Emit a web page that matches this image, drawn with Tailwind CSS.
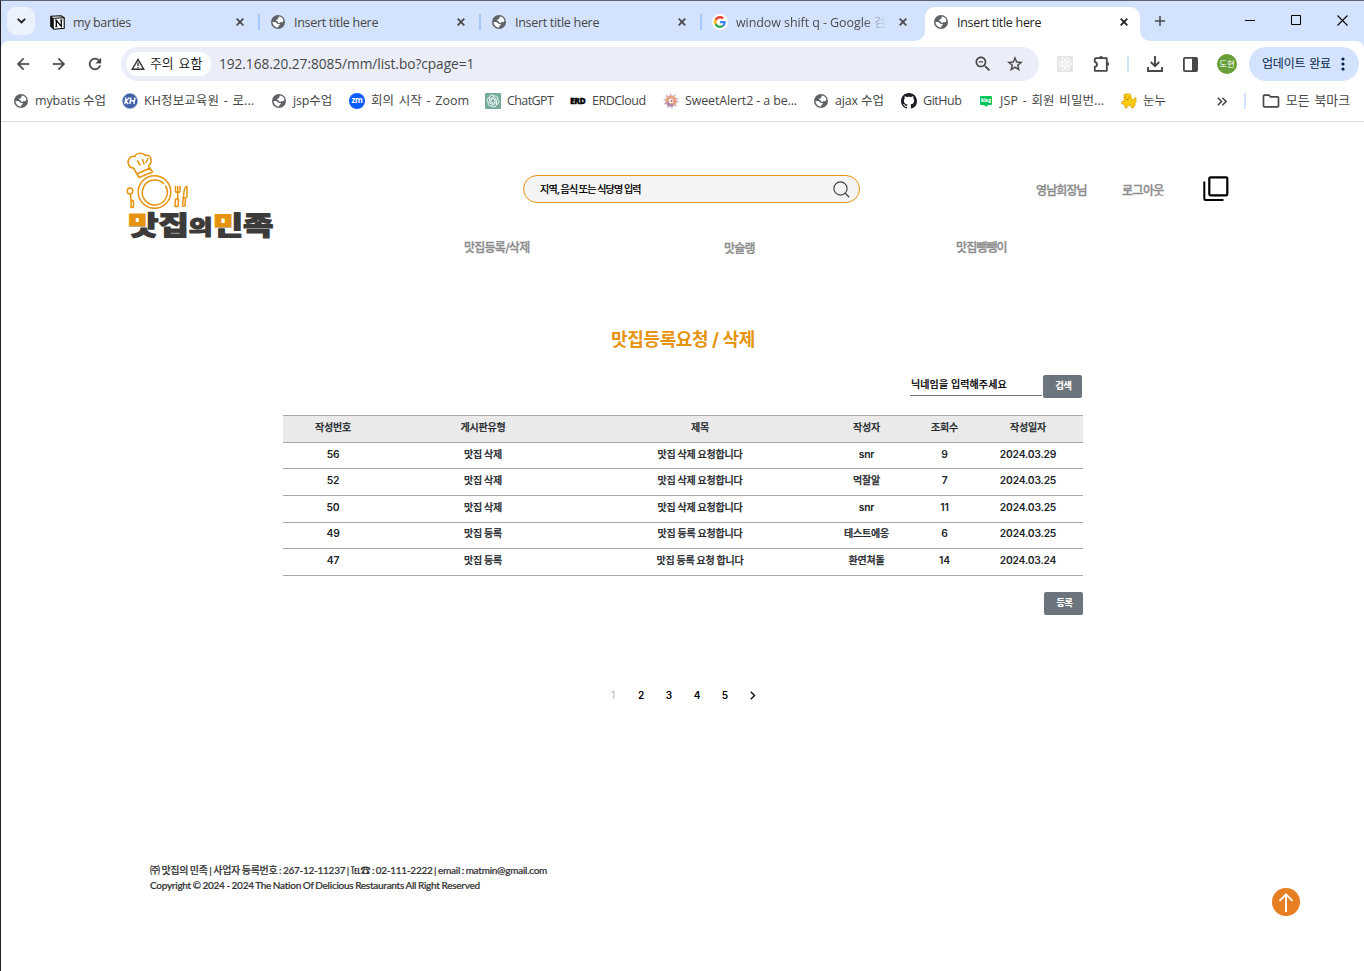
<!DOCTYPE html>
<html lang="ko">
<head>
<meta charset="utf-8">
<title>Insert title here</title>
<script src="https://cdn.jsdelivr.net/npm/@tailwindcss/browser@4"></script>
</head>
<body class="w-[1364px] h-[971px] overflow-hidden bg-white border-t border-l border-t-[#5f6475] border-l-[#222] font-[family-name:'Open_Sans','Noto_Sans_CJK_KR',sans-serif] text-[#474747] whitespace-nowrap">
<svg class="hidden">
  <symbol id="globe" viewBox="0 0 14 14"><circle cx="7" cy="7" r="7" fill="#5f6368"/><path fill="#fff" d="M8 1.500c2.400.2 4.200 2 4.500 4.300l-1.200 1.400-1.800-.2-.8 1-1.600-.5-.5-1.200-1.300-.3.1-1.500 1.600-.3.3-1.200zM1.500 6.900l3 .2 1.800 1.700 2.300.2.2 1.100-1.400.8-.3 1.600C3.800 12.300 1.700 9.900 1.500 6.900z"/></symbol>
  <symbol id="close" viewBox="0 0 8 8"><path d="M.7.7l6.600 6.600M7.300.7L.7 7.300" stroke="currentColor" stroke-width="1.700"/></symbol>
</svg>

<div class="h-[40px] bg-[#d3e3fd] flex">
  <div class="ml-[6px] mt-[6px] size-[28px] rounded-[9px] bg-[#ebf2fe] flex items-center justify-center"><svg class="w-[9px] h-[6px]" viewBox="0 0 9 6"><path d="M.8.8l3.700 3.700L8.200.8" fill="none" stroke="#1f1f1f" stroke-width="1.800"/></svg></div>
  <div class="ml-[4px] mt-[6px] w-[221px] h-[30px] flex items-center pl-[11px] relative">
    <svg class="size-[15px]" viewBox="0 0 15 15"><path d="M.8 1.300L11 .7l3.200 2.100v10.500l-10.400.9-3-3z" fill="#fff" stroke="#000" stroke-width="1.100"/><path d="M.8 1.300l3 2v10.900l-3-3z" fill="#111"/><path d="M3.800 3.300l10.400-.5" stroke="#000"/><path d="M6.300 11.500V5.500l5 5.800V5" fill="none" stroke="#000" stroke-width="1.300"/><path d="M5.300 5.400h2M10.200 5h2.200M5.300 11.700h2" stroke="#000"/></svg>
    <span class="ml-[8px] pt-[2px] text-[12.5px] tracking-[-0.35px]">my barties</span>
    <svg class="size-[8px] absolute right-[16px]"><use href="#close"/></svg><span class="absolute right-0 w-[2px] h-[16px] bg-[#a8c7fa]"></span>
  </div>
  <div class="mt-[6px] w-[221px] h-[30px] flex items-center pl-[11px] relative">
    <svg class="size-[14px]"><use href="#globe"/></svg><span class="ml-[9px] pt-[2px] text-[12.5px] tracking-[-0.3px]">Insert title here</span>
    <svg class="size-[8px] absolute right-[16px]"><use href="#close"/></svg><span class="absolute right-0 w-[2px] h-[16px] bg-[#a8c7fa]"></span>
  </div>
  <div class="mt-[6px] w-[221px] h-[30px] flex items-center pl-[11px] relative">
    <svg class="size-[14px]"><use href="#globe"/></svg><span class="ml-[9px] pt-[2px] text-[12.5px] tracking-[-0.3px]">Insert title here</span>
    <svg class="size-[8px] absolute right-[16px]"><use href="#close"/></svg><span class="absolute right-0 w-[2px] h-[16px] bg-[#a8c7fa]"></span>
  </div>
  <div class="mt-[6px] w-[221px] h-[30px] flex items-center pl-[10px] relative">
    <span class="size-[16px] rounded-full bg-white flex items-center justify-center"><svg class="size-[12px]" viewBox="0 0 48 48"><path fill="#EA4335" d="M24 9.500c3.540 0 6.710 1.220 9.210 3.600l6.850-6.850C35.900 2.380 30.470 0 24 0 14.620 0 6.510 5.380 2.560 13.220l7.980 6.190C12.430 13.720 17.740 9.500 24 9.500z"/><path fill="#4285F4" d="M46.980 24.550c0-1.570-.15-3.090-.38-4.550H24v9.020h12.940c-.58 2.960-2.260 5.480-4.780 7.180l7.730 6c4.510-4.180 7.090-10.360 7.090-17.650z"/><path fill="#FBBC05" d="M10.530 28.590c-.48-1.450-.76-2.990-.76-4.590s.27-3.140.76-4.590l-7.980-6.190C.92 16.460 0 20.120 0 24c0 3.880.92 7.540 2.560 10.780l7.970-6.190z"/><path fill="#34A853" d="M24 48c6.480 0 11.930-2.130 15.890-5.810l-7.730-6c-2.150 1.450-4.920 2.300-8.160 2.300-6.260 0-11.570-4.220-13.470-9.910l-7.980 6.190C6.510 42.620 14.620 48 24 48z"/></svg></span>
    <span class="ml-[8px] pt-[2px] w-[150px] overflow-hidden text-[12.5px] tracking-[-0.08px] bg-gradient-to-r from-[#474747] from-85% to-transparent bg-clip-text text-transparent">window shift q - Google 검</span>
    <svg class="size-[8px] absolute right-[16px]"><use href="#close"/></svg>
  </div>
  <div class="ml-[2px] mt-[6px] w-[215px] h-[34px] rounded-t-[10px] bg-white pb-[4px] flex items-center pl-[9px] relative text-[#1f1f1f]">
    <svg class="absolute left-[-10px] bottom-0 size-[10px]" viewBox="0 0 10 10"><path d="M10 0v10H0A10 10 0 0 0 10 0z" fill="#fff"/></svg>
    <svg class="absolute right-[-10px] bottom-0 size-[10px]" viewBox="0 0 10 10"><path d="M0 0v10h10A10 10 0 0 1 0 0z" fill="#fff"/></svg>
    <svg class="size-[14px]"><use href="#globe"/></svg><span class="ml-[9px] pt-[2px] text-[12.5px] tracking-[-0.3px]">Insert title here</span>
    <svg class="size-[8px] absolute right-[12px]"><use href="#close"/></svg>
  </div>
  <svg class="mt-[14px] ml-[14px] size-[12px]" viewBox="0 0 12 12"><path d="M6 1v10M1 6h10" stroke="#474747" stroke-width="1.500"/></svg>
  <div class="ml-auto mr-[16px] mt-[14px] flex gap-[36px] text-black">
    <svg class="size-[10px]" viewBox="0 0 10 10"><path d="M0 5.500h10" stroke="currentColor"/></svg>
    <svg class="size-[10px]" viewBox="0 0 10 10"><path d="M.5.5h9v9h-9z" fill="none" stroke="currentColor"/></svg>
    <svg class="size-[11px]" viewBox="0 0 11 11"><path d="M.5.5l10 10M10.500.5l-10 10" stroke="currentColor" stroke-width="1.100"/></svg>
  </div>
</div>

<div class="bg-[#d3e3fd]"><div class="h-[40px] bg-white rounded-t-[8px] pt-[6px] flex">
  <div class="w-[120px] h-[34px] flex items-center gap-[18px] pl-[13px] text-[#474747]">
    <svg class="size-[18px]" viewBox="0 0 24 24" fill="currentColor" stroke="currentColor" stroke-width=".4"><path d="M20 11H7.830l5.590-5.590L12 4l-8 8 8 8 1.410-1.410L7.830 13H20v-2z"/></svg>
    <svg class="size-[18px] rotate-180" viewBox="0 0 24 24" fill="currentColor" stroke="currentColor" stroke-width=".4"><path d="M20 11H7.830l5.590-5.590L12 4l-8 8 8 8 1.410-1.410L7.830 13H20v-2z"/></svg>
    <svg class="size-[18px]" viewBox="0 0 24 24" fill="currentColor" stroke="currentColor" stroke-width=".4"><path d="M17.650 6.350C16.200 4.900 14.210 4 12 4c-4.420 0-7.990 3.580-7.990 8s3.570 8 7.990 8c3.730 0 6.840-2.550 7.730-6h-2.080c-.82 2.330-3.040 4-5.650 4-3.310 0-6-2.690-6-6s2.690-6 6-6c1.660 0 3.140.69 4.220 1.780L13 11h7V4l-2.350 2.350z"/></svg>
  </div>
  <div class="w-[918px] h-[34px] rounded-full bg-[#ebeef8] flex items-center pl-[5px]">
    <div class="w-[85px] h-[24px] rounded-full bg-white flex items-center pl-[5px] gap-[5px] text-[#1f1f1f] text-[12.9px] [word-spacing:1.5px]"><svg class="w-[14px] h-[12px]" viewBox="0 0 14 12"><path d="M7 1.400L12.800 11.300H1.200z" fill="none" stroke="#333" stroke-width="1.400"/><path d="M7 4.500v3.500M7 9v1.300" stroke="#333" stroke-width="1.300"/></svg>주의 요함</div>
    <span class="ml-[8px] text-[13.7px] tracking-[-0.05px]">192.168.20.27:8085/mm/list.bo?cpage=1</span>
    <svg class="ml-auto size-[20px]" viewBox="0 0 24 24" fill="currentColor"><path d="M15.500 14h-.79l-.28-.27C15.410 12.590 16 11.110 16 9.500 16 5.910 13.090 3 9.500 3S3 5.910 3 9.500 5.910 16 9.500 16c1.610 0 3.090-.59 4.230-1.570l.27.28v.79l5 4.990L20.490 19l-4.990-5zm-6 0C7.010 14 5 11.990 5 9.500S7.010 5 9.500 5 14 7.010 14 9.500 11.990 14 9.500 14zM7 8.700h5v1.600H7z"/></svg>
    <svg class="ml-[13px] mr-[15px] size-[18px]" viewBox="0 0 24 24" fill="currentColor" stroke="currentColor" stroke-width=".4"><path d="M22 9.240l-7.190-.62L12 2 9.190 8.630 2 9.240l5.460 4.730L5.820 21 12 17.270 18.180 21l-1.630-7.030L22 9.240zM12 15.400l-3.760 2.270 1-4.280-3.320-2.880 4.380-.38L12 6.100l1.710 4.040 4.380.38-3.320 2.880 1 4.280L12 15.400z"/></svg>
  </div>
  <div class="flex items-center h-[34px] pl-[18px]">
    <svg class="size-[16px] bg-[#e6e6e6]" viewBox="0 0 16 16"><g fill="none" stroke="#fff" stroke-width=".9"><ellipse cx="8" cy="8" rx="6.500" ry="2.500"/><ellipse cx="8" cy="8" rx="6.500" ry="2.500" transform="rotate(60 8 8)"/><ellipse cx="8" cy="8" rx="6.500" ry="2.500" transform="rotate(120 8 8)"/></g><circle cx="8" cy="8" r="1.300" fill="#fff"/></svg>
    <svg class="ml-[20px] w-[17px] h-[18px]" viewBox="0 0 17 18"><path d="M1.800 3.200h12v4.300M13.800 10.500v5.300h-12v-4.100c3-.4 3-4.200 0-4.600V3.200M13.800 7v4" fill="none" stroke="currentColor" stroke-width="1.800" stroke-linejoin="round"/><path d="M6 3a2 2 0 0 1 4 0zM14.200 7a2 2 0 0 1 0 4z" fill="currentColor"/></svg>
    <span class="ml-[17px] w-[2px] h-[16px] bg-[#d3e3fd]"></span>
    <svg class="ml-[18px] size-[16px]" viewBox="0 0 16 16"><path d="M8 0v10M3.800 6L8 10.200 12.200 6M1 11v4h14v-4" fill="none" stroke="currentColor" stroke-width="1.900"/></svg>
    <svg class="ml-[20px] w-[15px] h-[15px]" viewBox="0 0 15 15"><rect x=".9" y=".9" width="13.200" height="13.200" rx="1" fill="none" stroke="currentColor" stroke-width="1.800"/><path d="M9 1h5v13H9z" fill="currentColor"/></svg>
    <span class="ml-[19px] size-[20px] rounded-full bg-[#689f38] text-white text-[8.5px] flex items-center justify-center">도현</span>
    <div class="ml-[12px] w-[110px] h-[34px] rounded-full bg-[#d3e3fd] flex items-center pl-[13px] text-[#041e49] text-[12px] tracking-[-0.2px] [word-spacing:1px]">업데이트 완료<svg class="ml-[10px] w-[4px] h-[14px]" viewBox="0 0 4 14" fill="#041e49"><circle cx="2" cy="2" r="1.600"/><circle cx="2" cy="7" r="1.600"/><circle cx="2" cy="12" r="1.600"/></svg></div>
  </div>
</div></div>

<div class="h-[41px] bg-white border-b border-[#dfdfdf] pl-[12px] flex items-center text-[12.5px] tracking-[-0.15px]">
  <div class="w-[109px] flex items-center gap-[7px]"><svg class="ml-px size-[14px]"><use href="#globe"/></svg>mybatis 수업</div>
  <div class="w-[149px] flex items-center gap-[6px] tracking-[0.1px] [word-spacing:1.3px]"><svg class="size-[16px]" viewBox="0 0 16 16"><circle cx="8" cy="8" r="7.500" fill="#3f62a8" stroke="#7d97c9" stroke-dasharray="1 1"/><path d="M4 4.500L2.800 11M7.500 4.500L4 8l2.200 3M9 4.500L7.800 11M13 4.500L11.800 11M8.500 7.700h4" fill="none" stroke="#fff" stroke-width="1.400"/></svg>KH정보교육원 - 로...</div>
  <div class="w-[78px] flex items-center gap-[7px]"><svg class="ml-px size-[14px]"><use href="#globe"/></svg>jsp수업</div>
  <div class="w-[136px] flex items-center gap-[6px] tracking-[0px] [word-spacing:1.5px]"><span class="size-[16px] rounded-full bg-[#0b5cff] text-white text-[8px] font-bold leading-[14px] text-center tracking-[-0.3px]">zm</span>회의 시작 - Zoom</div>
  <div class="w-[85px] flex items-center gap-[6px] tracking-[-0.6px]"><svg class="size-[16px] bg-[#74aa9c] rounded-[1px]" viewBox="0 0 16 16"><g fill="none" stroke="#fff" stroke-width=".85"><path id="petal" d="M6 8.900V5.200l3.200-1.900a2.600 2.600 0 0 1 3.700 3.100"/><use href="#petal" transform="rotate(60 8 8)"/><use href="#petal" transform="rotate(120 8 8)"/><use href="#petal" transform="rotate(180 8 8)"/><use href="#petal" transform="rotate(240 8 8)"/><use href="#petal" transform="rotate(300 8 8)"/></g></svg>ChatGPT</div>
  <div class="w-[93px] flex items-center gap-[6px] tracking-[-0.5px]"><span class="w-[16px] text-[8.5px] font-extrabold text-black tracking-[-0.4px] [-webkit-text-stroke:0.3px]">ERD</span>ERDCloud</div>
  <div class="w-[150px] flex items-center gap-[6px]"><svg class="size-[16px]" viewBox="0 0 16 16"><circle cx="8" cy="8" r="6.500" fill="none" stroke="#c3b5cf" stroke-width="2" stroke-dasharray="1.500 2.600"/><circle cx="8" cy="8" r="4" fill="#fff" stroke="#e3a585" stroke-width="3.600"/><path d="M4 9.500a4.300 4.300 0 0 0 6 2.300" fill="none" stroke="#a98aa8" stroke-width="2.500"/><circle cx="8.500" cy="8" r="1" fill="#b66"/></svg>SweetAlert2 - a be...</div>
  <div class="w-[88px] flex items-center gap-[7px]"><svg class="ml-px size-[14px]"><use href="#globe"/></svg>ajax 수업</div>
  <div class="w-[77px] flex items-center gap-[6px] tracking-[-0.45px]"><svg class="size-[16px]" viewBox="0 0 16 16" fill="#1b1f23"><path d="M8 0C3.580 0 0 3.580 0 8c0 3.540 2.290 6.530 5.470 7.590.4.07.55-.17.55-.38 0-.19-.01-.82-.01-1.490-2.010.37-2.530-.49-2.690-.94-.09-.23-.48-.94-.82-1.130-.28-.15-.68-.52-.01-.53.63-.01 1.080.58 1.230.82.72 1.210 1.870.87 2.330.66.07-.52.28-.87.51-1.070-1.780-.2-3.640-.89-3.640-3.950 0-.87.31-1.590.82-2.150-.08-.2-.36-1.020.08-2.120 0 0 .67-.21 2.200.82.64-.18 1.320-.27 2-.27s1.360.09 2 .27c1.530-1.040 2.200-.82 2.200-.82.44 1.100.16 1.920.08 2.120.51.56.82 1.270.82 2.150 0 3.070-1.870 3.750-3.650 3.950.29.25.54.73.54 1.480 0 1.070-.01 1.930-.01 2.200 0 .21.15.46.55.38A8.010 8.010 0 0 0 16 8c0-4.420-3.580-8-8-8z"/></svg>GitHub</div>
  <div class="w-[143px] flex items-center gap-[6px] tracking-[0.1px] [word-spacing:1.3px]"><svg class="size-[16px]" viewBox="0 0 16 16"><path d="M3 3h10a1 1 0 0 1 1 1v7a1 1 0 0 1-1 1h-3l-2 2-2-2H3a1 1 0 0 1-1-1V4a1 1 0 0 1 1-1z" fill="#03c75a"/><text x="8" y="9.200" font-size="4.500" font-weight="800" letter-spacing="0" text-anchor="middle" fill="#fff">blog</text></svg>JSP - 회원 비밀번...</div>
  <div class="flex items-center gap-[6px]"><svg class="size-[16px]" viewBox="0 0 16 16"><path d="M3 1.500Q6 0 9.500 1.200L11 7l2-.8 1-1.700 1.300 1-.8 1.600 1 1.200-1.500 2v2.500l-1.500.5V15h-2v-2.200H6V15H4v-2.800L.7 10.500.8 8.500 3 8.300z" fill="#fcca10" stroke="#d8a200" stroke-width=".7"/><path d="M4.700 3.800v1M8 3.800v1M5.500 6.500h2" stroke="#7a5c00" stroke-width=".8"/></svg>눈누</div>
  <svg class="ml-auto w-[10px] h-[9px]" viewBox="0 0 10 9"><path d="M.8.8l3.700 3.700L.8 8.200M5.300.8L9 4.500 5.300 8.200" fill="none" stroke="currentColor" stroke-width="1.600"/></svg>
  <span class="ml-[17px] w-[2px] h-[16px] bg-[#d3e3fd]"></span>
  <svg class="ml-[15px] size-[20px]" viewBox="0 0 24 24" fill="currentColor"><path d="M9.170 6l2 2H20v10H4V6h5.170M10 4H4c-1.100 0-1.990.9-1.990 2L2 18c0 1.100.9 2 2 2h16c1.100 0 2-.9 2-2V8c0-1.100-.9-2-2-2h-8l-2-2z"/></svg>
  <span class="ml-[5px] mr-[14px] text-[12.9px] tracking-[0px] [word-spacing:1.500px]">모든 북마크</span>
</div>

<div class="font-[family-name:Inter,'Noto_Sans_CJK_KR',sans-serif]">
  <header class="flex h-[190px]">
    <svg class="ml-[119px] mt-[24px] w-[160px] h-[100px] shrink-0" viewBox="120 146 160 100">
      <defs><pattern id="ink" patternUnits="userSpaceOnUse" x="0" y="0" width="400" height="400"><path fill="#3c3b39" d="M0 0h400v400H0z"/><path fill="#e6930f" d="M120 240h27.500v33H120zM213 240h19.500v34H213z"/></pattern></defs>
      <g fill="none" stroke="#e6930f" stroke-width="1.500" stroke-linecap="round" stroke-linejoin="round">
        <circle cx="154.500" cy="192" r="16.300"/><path d="M163.500 183.500A12.500 12.500 0 1 0 165.500 186"/>
        <path d="M139 177.500l-5.500-9.500c-4 .5-7-5-4.500-9 1.500-2.500 4-3 6-2.500.5-3.500 8-4.500 10.500-1 4-1 6.500 2.500 5.500 6.500-.5 2-1.500 3-2.500 4l4 6zM138 173.500l12-5.500M137.500 161l2.500 4M142.500 159.500l1.500 4.500M148 158.500l-2 4"/>
        <ellipse cx="130" cy="191" rx="2.700" ry="3"/><path d="M130.500 194l.5 6M131 200l2.500 1v6l-2.500.5z"/>
        <path d="M175.500 186.500v4.500c0 2 4.500 2 4.500 0v-4.500M177.700 186.500v12.500M175.500 199h3l-.5 7.500h-3zM182.500 206l1.500-14.500c.5-3 2-5 3-5v10.500l-1.500 1-.5 8zM182.500 198h3"/>
      </g>
      <g transform="scale(1 .83)" fill="url(#ink)" stroke="url(#ink)" stroke-width="1.400" stroke-linejoin="round" font-family="'Noto Sans CJK KR',sans-serif" font-weight="900">
        <text x="128" y="282.600" font-size="32" textLength="145.500" lengthAdjust="spacingAndGlyphs">맛집<tspan font-size="25">의</tspan>민족</text>
      </g>
    </svg>
    <div class="flex-1 text-[#8c8c8c] text-[12px] font-medium [-webkit-text-stroke:0.3px]">
      <div class="flex h-[28px] mt-[53px] items-center">
        <div class="ml-[243px] w-[337px] h-[28px] border border-[#e6930f] rounded-full bg-[#f4f4f4] flex items-center pl-[16px] pr-[9px] text-black text-[10px] tracking-[-0.75px] [word-spacing:-0.5px] [-webkit-text-stroke:0.15px]">지역, 음식 또는 식당명 입력
          <svg class="ml-auto size-[17px]" viewBox="0 0 17 17"><circle cx="7.500" cy="7.500" r="6.600" fill="none" stroke="#444" stroke-width="1.200"/><path d="M12.200 12.200l4 4" stroke="#444" stroke-width="1.300"/></svg></div>
        <span class="ml-[176px] mt-[4px] w-[86px] tracking-[-0.9px]">영남회장님</span><span class="mt-[4px] w-[80.500px] tracking-[-0.6px]">로그아웃</span>
        <svg class="size-[26px] -mt-px" viewBox="0 0 26 26"><rect x="6.300" y="1.300" width="18" height="18" rx="1.200" fill="none" stroke="#000" stroke-width="2.200"/><path d="M1.300 5.500v17.200q0 1.200 1.200 1.200H20.500" fill="none" stroke="#000" stroke-width="2"/></svg>
      </div>
      <nav class="flex mt-[35px] tracking-[-0.75px]"><span class="ml-[184px] w-[260px] pt-px">맛집등록/삭제</span><span class="w-[232px] pt-[2px]">맛슐랭</span><span class="pt-px tracking-[-0.9px]">맛집뺑뺑이</span></nav>
    </div>
  </header>

  <main class="ml-[282px] w-[800px] text-[#212529]">
    <h1 class="mt-[14px] text-center leading-[28px] text-[18px] tracking-[-0.38px] font-bold text-[#e6930f]">맛집등록요청 / 삭제</h1>
    <div class="mt-[21px] flex justify-end pr-px">
      <div class="mr-px w-[132px] h-[21px] border-b border-[#767676] pl-px text-black text-[10px] leading-[19px] font-medium tracking-[0.1px] [-webkit-text-stroke:0.2px]">닉네임을 입력해주세요</div>
      <button class="w-[39px] h-[23px] rounded-[2px] bg-[#6c757d] text-white text-[9px] font-bold tracking-[-0.4px] pb-px pl-[2px] [-webkit-text-stroke:0.2px]">검색</button>
    </div>
    <div class="mt-[17px] border-b border-[#a6a6a6] text-[10px] font-semibold [&_span:not(.n)]:font-medium [&_span:not(.n)]:[-webkit-text-stroke:0.25px] [&_.n]:text-[10.3px] tracking-[-0.2px] [word-spacing:-0.5px] text-center leading-[23px] [&>div]:grid [&>div]:grid-cols-[100px_200px_234px_99px_57px_110px] [&>div]:border-t [&>div]:border-[#a6a6a6]">
      <div class="h-[27px] bg-[#eaeaea]"><span>작성번호</span><span>게시판유형</span><span>제목</span><span>작성자</span><span>조회수</span><span>작성일자</span></div>
      <div class="h-[26px]"><span class="n">56</span><span>맛집 삭제</span><span>맛집 삭제 요청합니다</span><span class="n">snr</span><span class="n">9</span><span class="n">2024.03.29</span></div>
      <div class="h-[27px]"><span class="n">52</span><span>맛집 삭제</span><span>맛집 삭제 요청합니다</span><span>먹잘알</span><span class="n">7</span><span class="n">2024.03.25</span></div>
      <div class="h-[27px]"><span class="n">50</span><span>맛집 삭제</span><span>맛집 삭제 요청합니다</span><span class="n">snr</span><span class="n">11</span><span class="n">2024.03.25</span></div>
      <div class="h-[26px] leading-[21px]"><span class="n">49</span><span>맛집 등록</span><span>맛집 등록 요청합니다</span><span>테스트에옹</span><span class="n">6</span><span class="n">2024.03.25</span></div>
      <div class="h-[27px]"><span class="n">47</span><span>맛집 등록</span><span>맛집 등록 요청 합니다</span><span>환연쳐돌</span><span class="n">14</span><span class="n">2024.03.24</span></div>
    </div>
    <div class="mt-[16px] flex justify-end"><button class="w-[39px] h-[23px] rounded-[2px] bg-[#6c757d] text-white text-[9px] font-bold tracking-[-0.4px] pb-px pl-[2px] [-webkit-text-stroke:0.2px]">등록</button></div>
    <div class="mt-[70px] h-[20px] flex items-center justify-center text-black text-[10px] font-semibold [&>span]:w-[28px] [&>span]:text-center">
      <span class="text-[#b5b5b5] !font-normal">1</span><span>2</span><span>3</span><span>4</span><span>5</span><span class="flex justify-center"><svg class="w-[6px] h-[9px]" viewBox="0 0 6 9"><path d="M.7.8l3.900 3.700L.7 8.200" fill="none" stroke="#000" stroke-width="1.300"/></svg></span>
    </div>
  </main>

  <footer class="mt-[157px] ml-[149px] mr-[64px] flex justify-between font-[family-name:Lato,'Noto_Sans_CJK_KR',sans-serif] text-[10px] leading-[15px] font-medium text-[#333] [-webkit-text-stroke:0.2px]">
    <div><p class="tracking-[-0.27px] [word-spacing:-0.6px]">㈜ 맛집의 민족 | 사업자 등록번호 : 267-12-11237 | <span class="font-[family-name:'Noto_Sans_CJK_KR']">℡☎</span> : 02-111-2222 | email : matmin@gmail.com</p><p class="tracking-[-0.27px] [word-spacing:-0.5px]">Copyright © 2024 - 2024 The Nation Of Delicious Restaurants All Right Reserved</p></div>
    <svg class="mt-[26px] size-[28px]" viewBox="0 0 28 28"><circle cx="14" cy="14" r="14" fill="#e67e22"/><path d="M14 24V6.500M7.500 12.800L14 6.300l6.500 6.500" fill="none" stroke="#fff" stroke-width="1.900"/></svg>
  </footer>
</div>
</body>
</html>
